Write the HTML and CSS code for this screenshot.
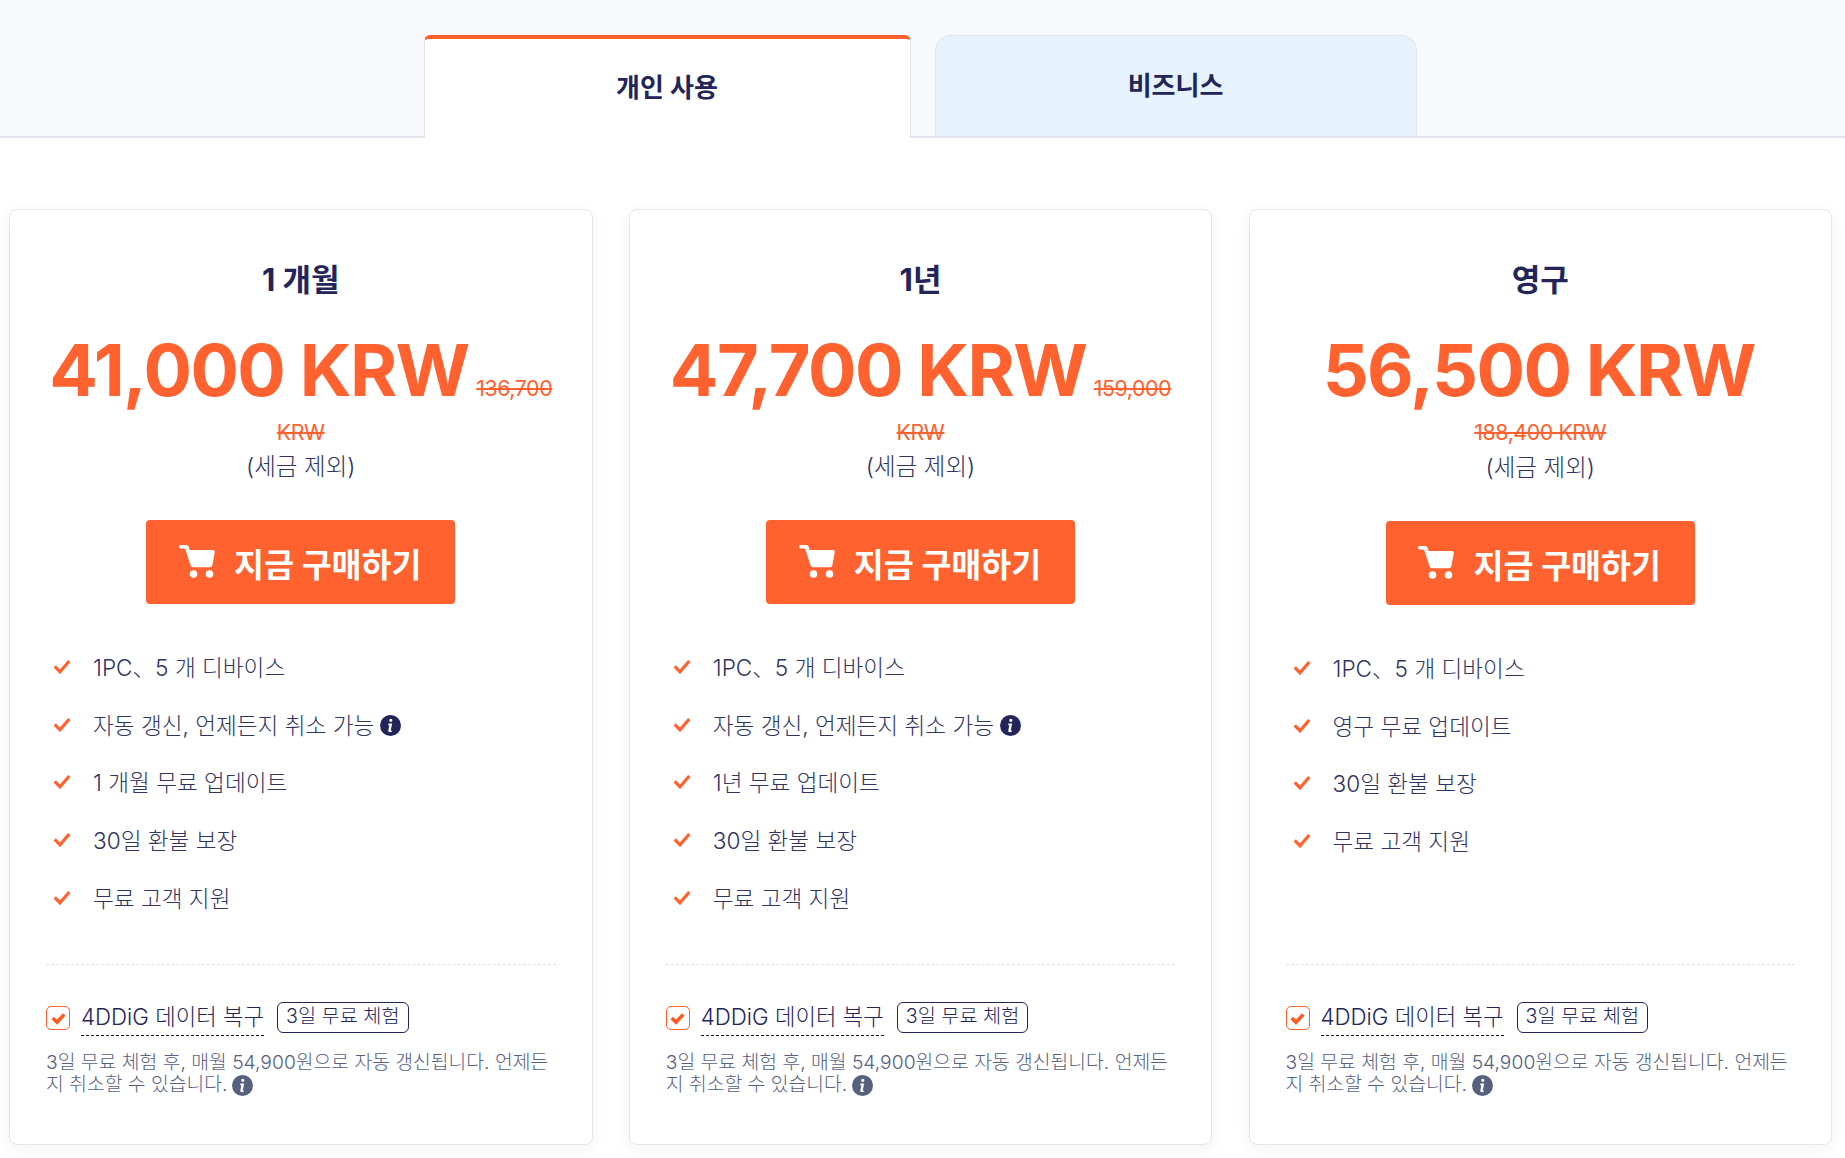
FILE: index.html
```html
<!DOCTYPE html>
<html lang="ko">
<head>
<meta charset="utf-8">
<title>4DDiG 가격</title>
<link rel="stylesheet" href="styles.css">
</head>
<body>
<svg class="defs" width="0" height="0" aria-hidden="true">
  <symbol id="info" viewBox="0 0 20 20"><circle cx="10" cy="10" r="10" fill="currentColor"/><path d="M10.3 3.600a1.500 1.500 0 1 1 0 3 1.500 1.500 0 0 1 0-3zM8 8.200h3.600l-1.300 6.200q-.1.600.6.500l.6-.1-.2 1.100q-1.300.5-2.400.4-1.300-.2-1-1.600l1-4.700-1-.3z" fill="#fff"/></symbol>
  <symbol id="check" viewBox="0 0 17 14"><path d="M1.600 6.800l5 5.200L15.400 1.800" fill="none" stroke="currentColor" stroke-width="3"/></symbol>
  <symbol id="boxcheck" viewBox="0 0 17 14"><path d="M2 6.500l4.800 4.800L15 2.500" fill="none" stroke="currentColor" stroke-width="4"/></symbol>
  <symbol id="cart" viewBox="0 0 36 33"><path d="M2 0h5q2 0 2.700 1.800L10.600 5H34q2 0 1.700 2.200l-2.300 13q-.4 2-2.400 2H14q-2 0-2.500-2L6.400 4.400Q6 3.500 5 3.500H2Q0 3.500 0 1.700T2 0z" fill="currentColor"/><circle cx="14.500" cy="29" r="3.800" fill="currentColor"/><circle cx="30.500" cy="29" r="3.800" fill="currentColor"/></symbol>
</svg>

<nav class="tabs">
  <a class="tab tab-active">개인 사용</a>
  <a class="tab tab-other">비즈니스</a>
</nav>

<main class="plans">
  <section class="card">
    <h2 class="plan-name">1 개월</h2>
    <p class="price-line"><b class="price">41,000 KRW</b> <s class="old">136,700</s></p>
    <p class="old-line"><s class="old">KRW</s></p>
    <p class="tax">(세금 제외)</p>
    <a class="buy"><svg class="cart"><use href="#cart"/></svg>지금 구매하기</a>
    <ul class="features">
      <li><svg class="tick"><use href="#check"/></svg>1PC、5 개 디바이스</li>
      <li><svg class="tick"><use href="#check"/></svg>자동 갱신, 언제든지 취소 가능<svg class="info"><use href="#info"/></svg></li>
      <li><svg class="tick"><use href="#check"/></svg>1 개월 무료 업데이트</li>
      <li><svg class="tick"><use href="#check"/></svg>30일 환불 보장</li>
      <li><svg class="tick"><use href="#check"/></svg>무료 고객 지원</li>
    </ul>
    <div class="addon">
      <div class="addon-row">
        <span class="box"><svg class="box-tick"><use href="#boxcheck"/></svg></span>
        <span class="addon-name">4DDiG 데이터 복구</span>
        <span class="badge">3일 무료 체험</span>
      </div>
      <p class="note">3일 무료 체험 후, 매월 54,900원으로 자동 갱신됩니다. 언제든지 취소할 수 있습니다.<svg class="info info-muted"><use href="#info"/></svg></p>
    </div>
  </section>

  <section class="card">
    <h2 class="plan-name">1년</h2>
    <p class="price-line"><b class="price">47,700 KRW</b> <s class="old">159,000</s></p>
    <p class="old-line"><s class="old">KRW</s></p>
    <p class="tax">(세금 제외)</p>
    <a class="buy"><svg class="cart"><use href="#cart"/></svg>지금 구매하기</a>
    <ul class="features">
      <li><svg class="tick"><use href="#check"/></svg>1PC、5 개 디바이스</li>
      <li><svg class="tick"><use href="#check"/></svg>자동 갱신, 언제든지 취소 가능<svg class="info"><use href="#info"/></svg></li>
      <li><svg class="tick"><use href="#check"/></svg>1년 무료 업데이트</li>
      <li><svg class="tick"><use href="#check"/></svg>30일 환불 보장</li>
      <li><svg class="tick"><use href="#check"/></svg>무료 고객 지원</li>
    </ul>
    <div class="addon">
      <div class="addon-row">
        <span class="box"><svg class="box-tick"><use href="#boxcheck"/></svg></span>
        <span class="addon-name">4DDiG 데이터 복구</span>
        <span class="badge">3일 무료 체험</span>
      </div>
      <p class="note">3일 무료 체험 후, 매월 54,900원으로 자동 갱신됩니다. 언제든지 취소할 수 있습니다.<svg class="info info-muted"><use href="#info"/></svg></p>
    </div>
  </section>

  <section class="card">
    <h2 class="plan-name">영구</h2>
    <p class="price-line"><b class="price">56,500 KRW</b></p>
    <p class="old-line old-line-full"><s class="old">188,400 KRW</s></p>
    <p class="tax">(세금 제외)</p>
    <a class="buy"><svg class="cart"><use href="#cart"/></svg>지금 구매하기</a>
    <ul class="features">
      <li><svg class="tick"><use href="#check"/></svg>1PC、5 개 디바이스</li>
      <li><svg class="tick"><use href="#check"/></svg>영구 무료 업데이트</li>
      <li><svg class="tick"><use href="#check"/></svg>30일 환불 보장</li>
      <li><svg class="tick"><use href="#check"/></svg>무료 고객 지원</li>
    </ul>
    <div class="addon">
      <div class="addon-row">
        <span class="box"><svg class="box-tick"><use href="#boxcheck"/></svg></span>
        <span class="addon-name">4DDiG 데이터 복구</span>
        <span class="badge">3일 무료 체험</span>
      </div>
      <p class="note">3일 무료 체험 후, 매월 54,900원으로 자동 갱신됩니다. 언제든지 취소할 수 있습니다.<svg class="info info-muted"><use href="#info"/></svg></p>
    </div>
  </section>
</main>
</body>
</html>
```

FILE: styles.css
```css
* { box-sizing: border-box; }
html, body { margin: 0; padding: 0; background: #fff; }
body {
  font-family: Inter, "Noto Sans CJK KR", "Noto Sans", sans-serif;
  color: #23255a;
  height: 1158px;
  overflow: hidden;
}
.defs { display: block; height: 0; }

.tabs {
  height: 138px;
  background: #f8f9fd;
  border-bottom: 2px solid #e1e4ec;
  display: flex;
  justify-content: center;
  gap: 24px;
  padding: 35px 5px 0 0;
  margin-bottom: -1px;
}
.tab {
  display: flex;
  align-items: center;
  justify-content: center;
  font-size: 26px;
  font-weight: 700;
  color: #23255a;
}
.tab-active {
  width: 487px;
  height: 103px;
  background: #fff;
  border: 1px solid #e1e4ec;
  border-top: 4px solid #ff612f;
  border-bottom: 0;
  border-radius: 6px 6px 0 0;
  padding-bottom: 7px;
}
.tab-other {
  width: 482px;
  height: 101px;
  background: #e6f3fd;
  border: 1px solid #dde4ec;
  border-bottom: 0;
  border-radius: 16px 16px 0 0;
  padding-bottom: 5px;
}

.plans {
  display: grid;
  grid-template-columns: repeat(3, 583.500px);
  gap: 36.250px;
  padding: 72px 0 0 9px;
}
.card {
  height: 936px;
  border: 1px solid #e6e6ea;
  border-radius: 8px;
  background: #fff;
  box-shadow: 0 4px 16px rgba(30, 40, 90, .06);
  padding: 50px 36px 0;
  display: flex;
  flex-direction: column;
  align-items: stretch;
  text-align: center;
}
.plan-name {
  margin: 0;
  height: 40px;
  line-height: 40px;
  font-size: 31px;
  font-weight: 700;
}
.price-line {
  margin: 30px -10px 0;
  height: 80px;
  line-height: 80px;
  white-space: nowrap;
}
.price {
  font-size: 72px;
  font-weight: 700;
  letter-spacing: -1.600px;
  color: #ff612f;
  margin-right: 3px;
}
.old { font-size: 21.300px; font-weight: 400; letter-spacing: -.4px; color: #ff612f; }
.old-line { margin: 2px 0 0; height: 40px; line-height: 40px; }
.old-line-full { height: 41px; }
.tax {
  margin: 0;
  height: 30px;
  line-height: 30px;
  font-size: 23.500px;
  font-weight: 300;
  color: #30345f;
}
.buy {
  margin: 38px auto 0;
  width: 309px;
  height: 84px;
  background: #ff612f;
  border-radius: 4px;
  color: #fff;
  font-size: 32.600px;
  font-weight: 700;
  display: flex;
  align-items: center;
  justify-content: center;
  gap: 19px;
}
.cart { width: 36px; height: 33px; color: #fff; margin: -2px 0 0 -1px; }

.features {
  list-style: none;
  margin: 34px 0 0;
  padding: 0;
  text-align: left;
}
.features li {
  height: 57.600px;
  display: flex;
  align-items: center;
  font-size: 22.600px;
  font-weight: 300;
  color: #30345f;
  padding-left: 7px;
}
.tick { width: 18px; height: 15px; color: #ff612f; margin-right: 22px; flex: none; }
.info { width: 21px; height: 21px; color: #23255a; margin: 3px 0 0 6px; flex: none; }
.info-muted { color: #56607f; vertical-align: -5px; margin: 0 0 0 5px; }

.addon {
  margin-top: auto;
  margin-bottom: 48px;
  border-top: 1px dashed #dfe1e6;
  padding-top: 35px;
  text-align: left;
}
.addon-row { display: flex; align-items: flex-start; height: 40px; }
.box {
  width: 24px;
  height: 24px;
  margin-top: 6px;
  border: 1px solid #ff612f;
  border-radius: 5px;
  display: flex;
  align-items: center;
  justify-content: center;
  flex: none;
}
.box-tick { width: 15px; height: 13px; color: #ff5a1f; }
.addon-name {
  margin: 2px 0 0 11px;
  padding-bottom: 3px;
  font-size: 22.300px;
  font-weight: 300;
  line-height: 30px;
  border-bottom: 1px dashed #111;
  white-space: nowrap;
}
.badge {
  margin: 2px 0 0 13px;
  height: 31px;
  line-height: 27px;
  padding: 0 8px;
  font-size: 19.700px;
  font-weight: 300;
  border: 1px solid #23255a;
  border-radius: 6px;
  white-space: nowrap;
}
.note {
  margin: 11px 0 0;
  font-size: 19.300px;
  font-weight: 300;
  line-height: 22px;
  color: #56607f;
  word-break: break-all;
}
```
